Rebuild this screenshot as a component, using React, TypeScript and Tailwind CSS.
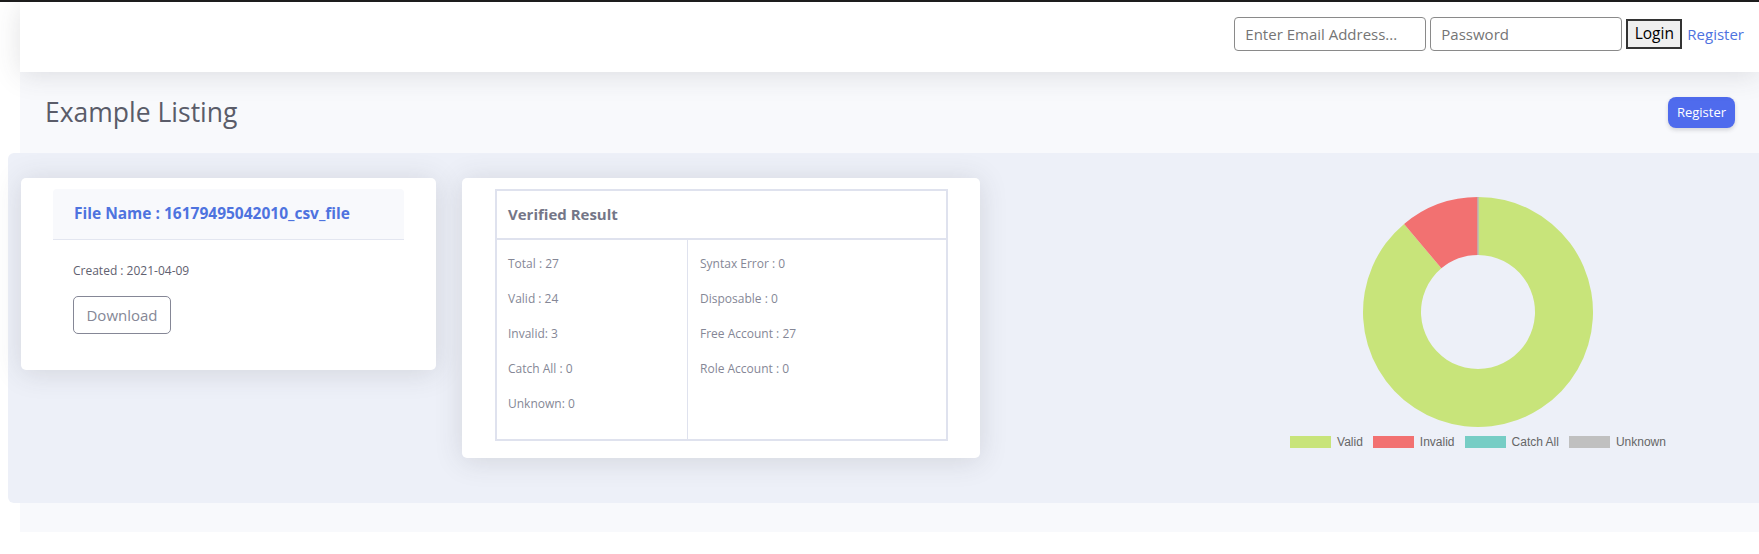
import React from "react";

const legend = [
  { label: "Valid", color: "bg-[#c8e47a]" },
  { label: "Invalid", color: "bg-[#f27171]" },
  { label: "Catch All", color: "bg-[#76cdc5]" },
  { label: "Unknown", color: "bg-[#c0c0c0]" },
];

function Donut() {
  return (
    <svg width="232" height="232" viewBox="0 0 232 232">
      <path
        d="M116 1 A115 115 0 1 1 42.08 27.91 L79.36 72.34 A57 57 0 1 0 116 59 Z"
        fill="#c8e47a"
      />
      <path
        d="M42.08 27.91 A115 115 0 0 1 116 1 L116 59 A57 57 0 0 0 79.36 72.34 Z"
        fill="#f27171"
      />
      <line x1="116" y1="1" x2="116" y2="59" stroke="#b9b9b9" strokeWidth="1.5" />
    </svg>
  );
}

export default function App() {
  return (
    <div className="min-h-screen bg-white font-['Open_Sans',sans-serif]">
      <div className="h-[2px] bg-[#1c1c1c]" />
      <div className="ml-[20px] bg-[#f8f9fc] pb-[29px]">
        <header className="relative z-10 flex h-[70px] items-center justify-end bg-white pb-[6px] pr-[15px] shadow-[0_0.15rem_1.75rem_0_rgba(58,59,69,0.15)]">
          <input
            className="h-[34px] w-[192px] rounded-[4px] border border-[#8a8a8a] px-[10px] text-[15px] text-[#333] outline-none placeholder:text-[#757575]"
            placeholder="Enter Email Address..."
          />
          <input
            type="password"
            className="ml-[4px] h-[34px] w-[192px] rounded-[4px] border border-[#8a8a8a] px-[10px] text-[15px] text-[#333] outline-none placeholder:text-[#757575]"
            placeholder="Password"
          />
          <button className="ml-[4px] h-[30px] w-[56px] border-2 border-[#333] bg-[#efefef] text-[15.5px] text-black">
            Login
          </button>
          <a className="ml-[5px] text-[15px] text-[#4e73df]">Register</a>
        </header>

        <div className="flex h-[81px] items-center justify-between pl-[25px] pr-[24px]">
          <h1 className="text-[26.5px] font-normal leading-[1.2] text-[#5a5c69]">Example Listing</h1>
          <button className="h-[31px] w-[67px] rounded-[8px] bg-[#4f6bed] text-[13px] text-white shadow-[0_2px_4px_rgba(58,59,69,0.2)]">
            Register
          </button>
        </div>

        <div className="-ml-[12px] flex h-[350px] items-start rounded-l-[6px] bg-[#edf0f8] pl-[13px] pt-[25px]">
          {/* Card 1 */}
          <div className="w-[415px] rounded-[5px] bg-white px-[32px] pb-[36px] pt-[11px] shadow-[0_0.15rem_1.75rem_0_rgba(58,59,69,0.15)]">
            <div className="flex h-[51px] items-center rounded-t-[4px] border-b border-[#e3e6f0] bg-[#f8f9fc] px-[21px]">
              <span className="text-[15.5px] font-bold text-[#4e73df]">File Name : 16179495042010_csv_file</span>
            </div>
            <div className="px-[20px]">
              <p className="mt-[21px] text-[12px] leading-[20px] text-[#5f6170]">Created : 2021-04-09</p>
              <button className="mt-[15px] h-[38px] w-[98px] rounded-[5px] border border-[#858796] text-[15px] text-[#858796]">
                Download
              </button>
            </div>
          </div>

          {/* Card 2 */}
          <div className="ml-[26px] w-[518px] rounded-[5px] bg-white pb-[17px] pl-[33px] pr-[32px] pt-[11px] shadow-[0_0.15rem_1.75rem_0_rgba(58,59,69,0.15)]">
            <div className="w-[453px] border-2 border-[#dfe2ee]">
              <div className="flex h-[49px] items-center border-b-2 border-[#dfe2ee] pl-[11px]">
                <span className="text-[15px] font-bold text-[#747687]">Verified Result</span>
              </div>
              <div className="flex">
                <div className="w-[191px] border-r border-[#dfe2ee] pb-[10px] pl-[11px] pt-[14px] text-[12px] leading-[20px] text-[#858796]">
                  <p className="mb-[15px]">Total : 27</p>
                  <p className="mb-[15px]">Valid : 24</p>
                  <p className="mb-[15px]">Invalid: 3</p>
                  <p className="mb-[15px]">Catch All : 0</p>
                  <p className="mb-[15px]">Unknown: 0</p>
                </div>
                <div className="flex-1 pl-[12px] pt-[14px] text-[12px] leading-[20px] text-[#858796]">
                  <p className="mb-[15px]">Syntax Error : 0</p>
                  <p className="mb-[15px]">Disposable : 0</p>
                  <p className="mb-[15px]">Free Account : 27</p>
                  <p className="mb-[15px]">Role Account : 0</p>
                </div>
              </div>
            </div>
          </div>

          {/* Chart */}
          <div className="ml-[298px] mt-[18px] flex w-[400px] flex-col items-center">
            <Donut />
            <div className="mt-[7px] flex items-center font-['Liberation_Sans',Arial,sans-serif] text-[12px] leading-[14px] text-[#666]">
              {legend.map((l, i) => (
                <div key={l.label} className={`flex items-center ${i > 0 ? "ml-[10px]" : ""}`}>
                  <span className={`inline-block h-[12px] w-[41px] ${l.color}`} />
                  <span className="ml-[6px]">{l.label}</span>
                </div>
              ))}
            </div>
          </div>
        </div>
      </div>
    </div>
  );
}
